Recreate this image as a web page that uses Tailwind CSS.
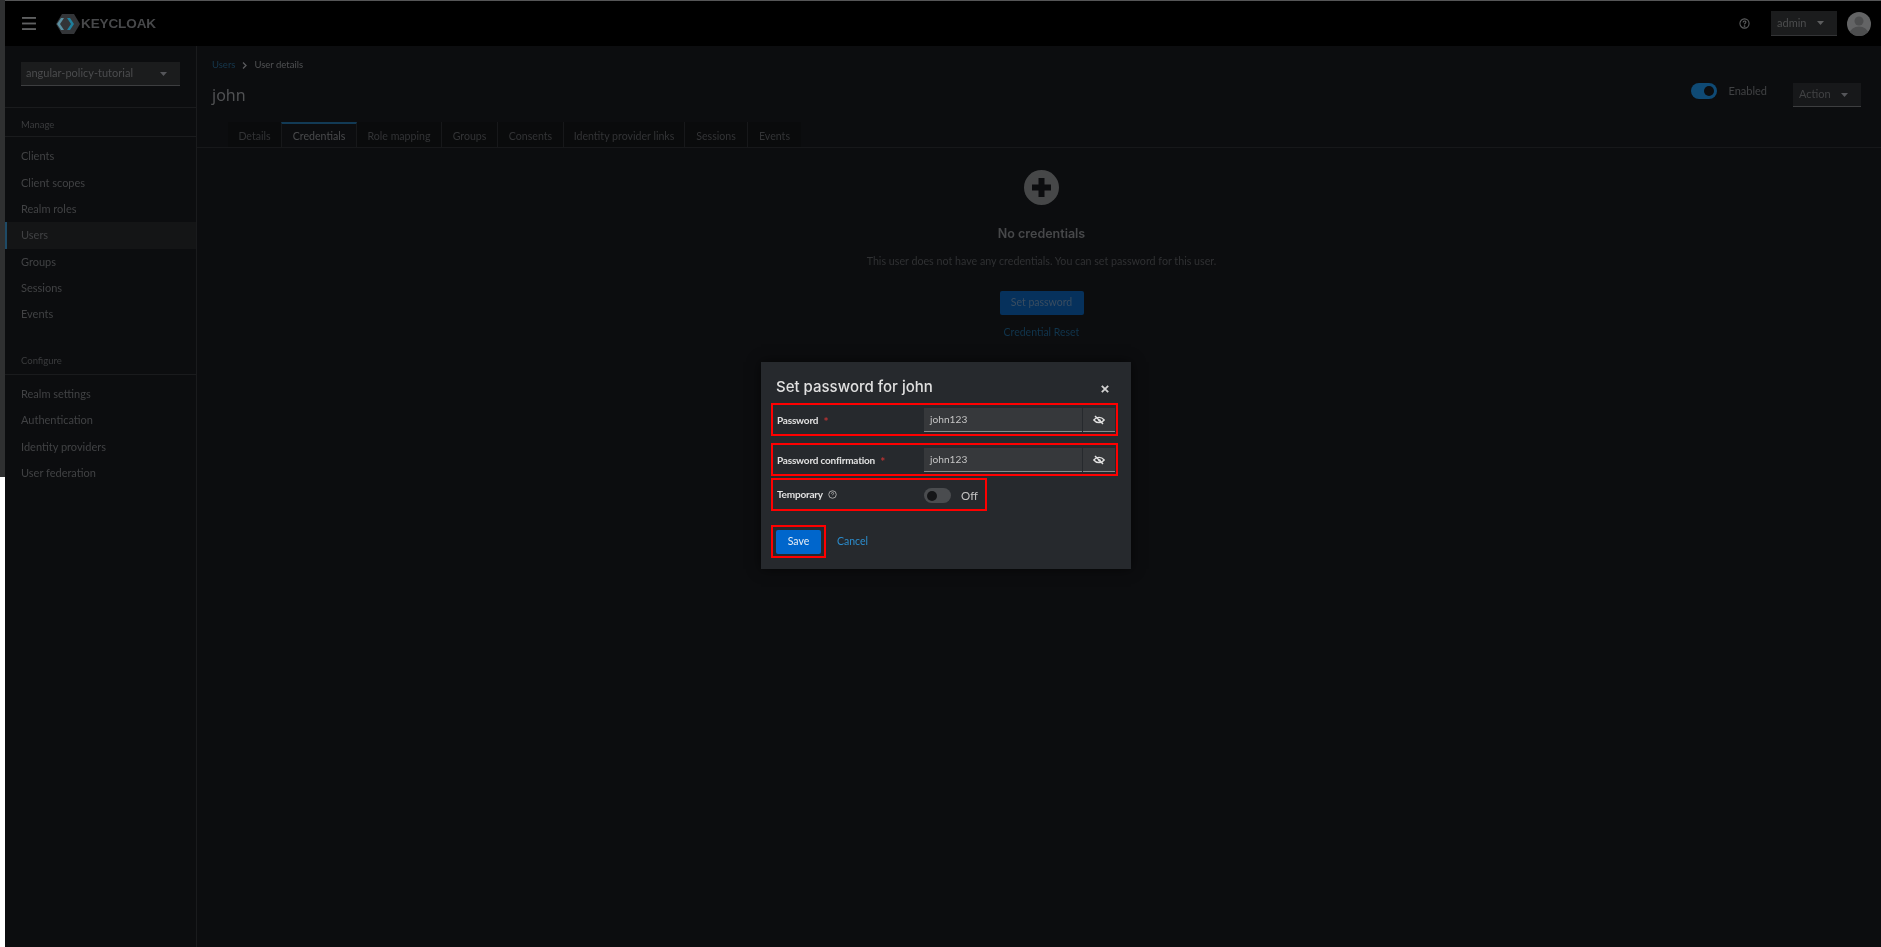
<!DOCTYPE html>
<html lang="en">
<head>
  <meta charset="UTF-8" />
  <title>Keycloak</title>
  <script src="https://cdn.jsdelivr.net/npm/@tailwindcss/browser@4"></script>
</head>
<body class="relative h-[947px] w-[1881px] overflow-hidden bg-white font-['Lato','Noto_Sans',sans-serif] blur-[0.35px]">
  <div class="flex h-full w-full">
    <!-- left strip of the capture -->
    <div class="flex w-[5px] shrink-0 flex-col">
      <div class="h-[477px] bg-[#2f3031]"></div>
      <div class="flex-1 bg-white"></div>
    </div>

    <div class="flex min-w-0 flex-1 flex-col bg-[#0c0d0f]">
      <!-- header -->
      <header class="flex h-[46px] shrink-0 items-center border-t border-[#555657] bg-black pl-[17px] pr-[10px]">
        <svg class="h-[13px] w-[14px]" viewBox="0 0 15 14" fill="#5f6061"><rect y="0" width="15" height="2"/><rect y="6" width="15" height="2"/><rect y="12" width="15" height="2"/></svg>
        <div class="ml-[20px] flex items-center">
          <svg class="h-[20px] w-[25px]" viewBox="0 0 25 20">
            <path d="M6 0h12l6 10-6 10H6L0 10z" fill="#333538"/>
            <path d="M5 4 1 10l4 6h3l-4-6 4-6z" fill="#5a8fa0"/>
            <path d="M11 4 15 10l-4 6h3l4-6-4-6z" fill="#1f7f9c"/>
          </svg>
          <span class="font-['Liberation_Sans',sans-serif] text-[13.500px] font-bold leading-none tracking-[-0.1px] text-[#47484a]">KEYCLOAK</span>
        </div>
        <div class="ml-auto flex items-center">
          <svg class="h-[11px] w-[11px]" viewBox="0 0 12 12" fill="none" stroke="#5c5d5e" stroke-width="1.200"><circle cx="6" cy="6" r="5"/><path d="M4.500 4.800c0-2 3-2 3-.2 0 1.100-1.500 1.100-1.500 2.400"/><circle cx="6" cy="8.800" r=".4"/></svg>
          <div class="ml-[21px] flex h-[25px] w-[66px] items-center border-b border-[#333436] bg-[#1b1c1d] pl-[6px] text-[11px] text-[#4c4d4e]">
            admin
            <svg class="ml-auto mr-[13px] h-[4px] w-[7px]" viewBox="0 0 7 4" fill="#5c5d5e"><path d="M0 0h7L3.500 4z"/></svg>
          </div>
          <svg class="ml-[10px] h-[24px] w-[24px]" viewBox="0 0 24 24"><clipPath id="av"><circle cx="12" cy="12" r="12"/></clipPath><g clip-path="url(#av)"><rect width="24" height="24" fill="#636465"/><circle cx="12" cy="9" r="4.500" fill="#4d4e4f"/><ellipse cx="12" cy="21" rx="9" ry="6.500" fill="#4d4e4f"/></g></svg>
        </div>
      </header>

      <div class="flex min-h-0 flex-1">
        <!-- sidebar -->
        <aside class="w-[192px] shrink-0 border-r border-[#1a1b1d] text-[11px]">
          <div class="h-[61px] pl-[16px] pt-[16px]">
            <div class="flex h-[24px] w-[159px] items-center border-b border-[#3d3e40] bg-[#1b1c1d] pl-[5px] text-[#4b4c4e]">
              angular-policy-tutorial
              <svg class="ml-auto mr-[13px] h-[4px] w-[7px]" viewBox="0 0 7 4" fill="#55565a"><path d="M0 0h7L3.500 4z"/></svg>
            </div>
          </div>
          <div class="flex h-[30px] items-center border-y border-[#1a1b1d] pl-[16px] pt-[7px] text-[9.500px] text-[#3b3c3e]">Manage</div>
          <nav class="pt-[6.500px] text-[#414244]">
            <div class="flex h-[26.300px] items-center pl-[16px]">Clients</div>
            <div class="flex h-[26.300px] items-center pl-[16px]">Client scopes</div>
            <div class="flex h-[26.300px] items-center pl-[16px]">Realm roles</div>
            <div class="flex h-[26.300px] items-center border-l-2 border-[#1e4a66] bg-[#141516] pl-[14px]">Users</div>
            <div class="flex h-[26.300px] items-center pl-[16px]">Groups</div>
            <div class="flex h-[26.300px] items-center pl-[16px]">Sessions</div>
            <div class="flex h-[26.300px] items-center pl-[16px]">Events</div>
          </nav>
          <div class="mt-[19px] flex h-[28px] items-center border-b border-[#1a1b1d] pl-[16px] pt-[2px] text-[9.500px] text-[#3b3c3e]">Configure</div>
          <nav class="pt-[6.500px] text-[#414244]">
            <div class="flex h-[26.300px] items-center pl-[16px]">Realm settings</div>
            <div class="flex h-[26.300px] items-center pl-[16px]">Authentication</div>
            <div class="flex h-[26.300px] items-center pl-[16px]">Identity providers</div>
            <div class="flex h-[26.300px] items-center pl-[16px]">User federation</div>
          </nav>
        </aside>

        <!-- main -->
        <main class="min-w-0 flex-1">
          <div class="flex h-[76px] flex-col pl-[15px] pr-[20px]">
            <div class="flex h-[36px] items-center pt-[3px] text-[9.500px]">
              <span class="text-[#16384e]">Users</span>
              <svg class="mx-[7px] h-[7px] w-[5px]" viewBox="0 0 5 7" fill="none" stroke="#5a5b5d" stroke-width="1.300"><path d="M1 .5 4 3.500 1 6.500"/></svg>
              <span class="text-[#505153]">User details</span>
            </div>
            <div class="flex items-start justify-between">
              <h1 class="pt-[2px] font-['Noto_Sans',sans-serif] text-[16px] leading-[22px] text-[#505153]">john</h1>
              <div class="flex items-start pt-[1px]">
                <span class="flex h-[16px] w-[26px] items-center justify-end rounded-full bg-[#0f4a75] pr-[3px]"><span class="h-[10px] w-[10px] rounded-full bg-[#0c0d0f]"></span></span>
                <span class="ml-[11px] text-[11px] leading-[16px] text-[#414244]">Enabled</span>
                <div class="ml-[26px] flex h-[24px] w-[68px] items-center border-b border-[#3d3e40] bg-[#17181a] pl-[6px] text-[11px] text-[#414244]">
                  Action
                  <svg class="ml-auto mr-[13px] h-[4px] w-[7px]" viewBox="0 0 7 4" fill="#55565a"><path d="M0 0h7L3.500 4z"/></svg>
                </div>
              </div>
            </div>
          </div>

          <!-- tabs -->
          <div class="flex h-[26px] whitespace-nowrap border-b border-[#17181a] pl-[31px] text-[10.600px] text-[#333436]">
            <div class="flex w-[53px] items-center justify-center bg-[#0a0b0c] pt-[4px]">Details</div>
            <div class="flex w-[76px] items-center justify-center border-x border-t-2 border-x-[#17181a] border-t-[#123a55] bg-[#0c0d0f] pt-[2px] text-[#4a4b4d]">Credentials</div>
            <div class="flex w-[85px] items-center justify-center border-r border-[#17181a] bg-[#0a0b0c] pt-[4px]">Role mapping</div>
            <div class="flex w-[56px] items-center justify-center border-r border-[#17181a] bg-[#0a0b0c] pt-[4px]">Groups</div>
            <div class="flex w-[66px] items-center justify-center border-r border-[#17181a] bg-[#0a0b0c] pt-[4px]">Consents</div>
            <div class="flex w-[121px] items-center justify-center border-r border-[#17181a] bg-[#0a0b0c] pt-[4px]">Identity provider links</div>
            <div class="flex w-[63px] items-center justify-center border-r border-[#17181a] bg-[#0a0b0c] pt-[4px]">Sessions</div>
            <div class="flex w-[53px] items-center justify-center bg-[#0a0b0c] pt-[4px]">Events</div>
          </div>

          <!-- empty state -->
          <div class="flex flex-col items-center pl-[5px] pt-[22px]">
            <svg class="h-[35px] w-[35px]" viewBox="0 0 35 35"><circle cx="17.500" cy="17.500" r="17.500" fill="#464748"/><path d="M14.500 8h6v6.500H27v6h-6.500V27h-6v-6.500H8v-6h6.500z" fill="#0c0d0f"/></svg>
            <div class="mt-[18px] font-['Inter','Noto_Sans',sans-serif] text-[12.500px] font-semibold leading-[22px] text-[#47484a]">No credentials</div>
            <div class="mt-[7px] text-[10.700px] leading-[18px] text-[#303133]">This user does not have any credentials. You can set password for this user.</div>
            <div class="mt-[21px] flex h-[24px] w-[84px] items-center justify-center rounded-[2px] bg-[#06315c] text-[10.500px] text-[#3a4d60]">Set password</div>
            <div class="mt-[10px] text-[10.500px] leading-[14px] text-[#11354d]">Credential Reset</div>
          </div>
        </main>
      </div>
    </div>
  </div>

  <!-- modal -->
  <div class="absolute left-[761px] top-[362px] h-[207px] w-[370px] bg-[#26292d] px-[10px] pt-[13px] shadow-[0_0_12px_rgba(0,0,0,0.6)]">
    <div class="flex items-center justify-between pl-[5px] pr-[12px]">
      <h2 class="font-['Inter','Noto_Sans',sans-serif] text-[15px] font-medium leading-[24px] text-[#e0e0e0]">Set password for john</h2>
      <svg class="mt-[3px] h-[8px] w-[8px]" viewBox="0 0 8 8" stroke="#d2d2d2" stroke-width="1.800"><path d="M.8.8l6.400 6.400M7.200.8.8 7.200"/></svg>
    </div>

    <div class="mt-[4px] flex h-[33px] w-[347px] items-center border-2 border-[#ff0000] pl-[4px] pr-[1px]">
      <div class="w-[147px] text-[10px] font-bold tracking-[-0.2px] text-[#e0e0e0]">Password <span class="ml-[3px] inline-block translate-y-[2px] text-[12px] text-[#b33]">*</span></div>
      <div class="mt-[1px] flex h-[24px] w-[158px] items-center border-b border-[#8a8b8c] bg-[#36383b] pl-[6px] text-[10.200px] text-[#c4c4c4]">john123</div>
      <div class="ml-[1px] mt-[1px] flex h-[24px] w-[32px] items-center justify-center border-b border-[#8a8b8c] bg-[#36383b]">
        <svg class="h-[10px] w-[12px]" viewBox="0 0 12 10" fill="none" stroke="#e0e0e0" stroke-width="1.300"><path d="M.8 5c2.800-3.600 7.600-3.600 10.400 0-2.800 3.600-7.600 3.600-10.400 0z"/><circle cx="6.500" cy="5.500" r="1.300" fill="#e0e0e0" stroke="none"/><path d="M2 1l8 8" stroke-width="1.500"/></svg>
      </div>
    </div>

    <div class="mt-[7px] flex h-[33px] w-[347px] items-center border-2 border-[#ff0000] pl-[4px] pr-[1px]">
      <div class="w-[147px] text-[10px] font-bold tracking-[-0.2px] text-[#e0e0e0]">Password confirmation <span class="ml-[3px] inline-block translate-y-[2px] text-[12px] text-[#b33]">*</span></div>
      <div class="mt-[1px] flex h-[24px] w-[158px] items-center border-b border-[#8a8b8c] bg-[#36383b] pl-[6px] text-[10.200px] text-[#c4c4c4]">john123</div>
      <div class="ml-[1px] mt-[1px] flex h-[24px] w-[32px] items-center justify-center border-b border-[#8a8b8c] bg-[#36383b]">
        <svg class="h-[10px] w-[12px]" viewBox="0 0 12 10" fill="none" stroke="#e0e0e0" stroke-width="1.300"><path d="M.8 5c2.800-3.600 7.600-3.600 10.400 0-2.800 3.600-7.600 3.600-10.400 0z"/><circle cx="6.500" cy="5.500" r="1.300" fill="#e0e0e0" stroke="none"/><path d="M2 1l8 8" stroke-width="1.500"/></svg>
      </div>
    </div>

    <div class="mt-[2px] flex h-[33px] w-[216px] items-center border-2 border-[#ff0000] pl-[4px]">
      <div class="flex w-[147px] items-center text-[10px] font-bold tracking-[-0.2px] text-[#e0e0e0]">
        Temporary
        <svg class="ml-[5px] h-[9px] w-[9px]" viewBox="0 0 12 12" fill="none" stroke="#b0b0b0" stroke-width="1.200"><circle cx="6" cy="6" r="5"/><path d="M4.500 4.800c0-2 3-2 3-.2 0 1.100-1.500 1.100-1.500 2.400"/></svg>
      </div>
      <span class="mt-[2px] flex h-[15px] w-[27px] items-center rounded-full bg-[#4a4c4f] pl-[3px]"><span class="h-[10px] w-[10px] rounded-full bg-[#151618]"></span></span>
      <span class="ml-[10px] mt-[2px] text-[11.500px] text-[#c4c4c4]">Off</span>
    </div>

    <div class="mt-[14px] flex items-center">
      <div class="flex h-[33px] w-[55px] items-center justify-center border-2 border-[#ff0000]">
        <div class="flex h-[24px] w-[45px] items-center justify-center rounded-[2px] bg-[#0066cc] text-[10.500px] text-[#e8eef5]">Save</div>
      </div>
      <span class="ml-[11px] mt-[1px] text-[10.500px] text-[#2b8ccc]">Cancel</span>
    </div>
  </div>
</body>
</html>
